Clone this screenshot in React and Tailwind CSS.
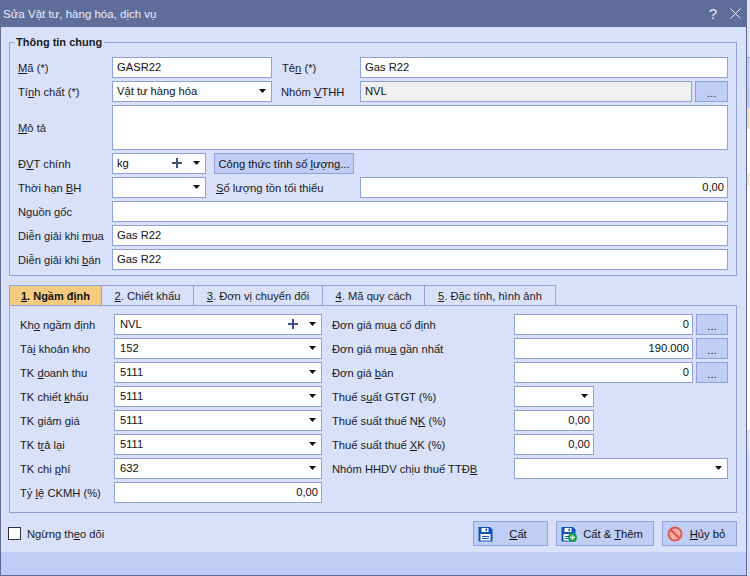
import React from "react";

const caret = (
  <svg width="7" height="4" viewBox="0 0 7 4" className="shrink-0">
    <path d="M0 0h7L3.5 4z" fill="#111" />
  </svg>
);

const plus = (
  <svg width="10" height="10" viewBox="0 0 10 10" className="shrink-0">
    <path d="M4 0h2v4h4v2H6v4H4V6H0V4h4z" fill="#3f5080" />
  </svg>
);

const Floppy = ({ add }) => (
  <svg width="16" height="16" viewBox="0 0 16 16" className="shrink-0">
    <path d="M.5 1h11.5l2.5 2.5V15.5H.5z" fill="#0f55b8" />
    <path d="M3.5 2h7v4h-7z" fill="#fff" />
    <path d="M7.5 2.6h1.6v2.6H7.5z" fill="#0f55b8" />
    <path d="M2.5 8h10v6.5h-10z" fill="#fff" />
    <path d="M4 10.5h7M4 12.5h7" stroke="#0f55b8" />
    {add && <circle cx="11.5" cy="11.5" r="4.5" fill="#12a150" />}
    {add && <path d="M9.2 11.5h4.6M11.5 9.2v4.6" stroke="#fff" strokeWidth="1.4" />}
  </svg>
);

const cancelIcon = (
  <svg width="16" height="16" viewBox="0 0 16 16" className="shrink-0">
    <circle cx="8" cy="8" r="6.5" fill="#f3b0a8" stroke="#e05a50" strokeWidth="2" />
    <path d="M3.6 3.6l8.8 8.8" stroke="#e05a50" strokeWidth="2.2" />
  </svg>
);

// hotkey letter, the old winforms way
const L = ({ a, u, b }) => (
  <>
    {a}
    <span className="underline">{u}</span>
    {b}
  </>
);

const Label = ({ className = "", children }) => (
  <span className={`whitespace-nowrap ${className}`}>{children}</span>
);

const Box = ({ className = "", children, right, gray }) => (
  <div
    className={`h-[21px] flex items-center border border-[#8fa2dc] pb-px text-[#111] ${
      gray ? "bg-[#f0f0f0]" : "bg-white"
    } ${right ? "justify-end pr-[3px]" : "px-1"} ${className}`}
  >
    {children}
  </div>
);

const Select = ({ value, add, className = "", pad = "pl-1" }) => (
  <div
    className={`h-[21px] flex items-center border border-[#8fa2dc] bg-white ${pad} pr-[5px] pb-px text-[#111] ${className}`}
  >
    <span className="flex-1">{value}</span>
    {add && <span className="mr-[11px] flex">{plus}</span>}
    {caret}
  </div>
);

const Dots = ({ className = "" }) => (
  <div
    className={`h-[21px] flex items-end justify-center pb-[2px] border border-[#8fa2dc] bg-[#c0cef5] leading-[12px] ${className}`}
  >
    ...
  </div>
);

const Row = ({ className = "", children }) => (
  <div className={`flex items-center h-[21px] ${className}`}>{children}</div>
);

const tabs = [
  { w: "w-[93px]", label: <L u="1" b=". Ngầm định" />, active: true },
  { w: "w-[92px]", label: <L u="2" b=". Chiết khấu" /> },
  { w: "w-[129px]", label: <L u="3" b=". Đơn vị chuyển đổi" /> },
  { w: "w-[102px]", label: <L u="4" b=". Mã quy cách" /> },
  { w: "w-[131px]", label: <L u="5" b=". Đặc tính, hình ảnh" /> },
];

const accounts = [
  { label: <L a="Tà" u="i" b=" khoản kho" />, value: "152" },
  { label: <L a="TK " u="d" b="oanh thu" />, value: "5111" },
  { label: <L a="TK chiết " u="k" b="hấu" />, value: "5111" },
  { label: <L a="TK " u="g" b="iảm giá" />, value: "5111" },
  { label: <L a="TK t" u="r" b="ả lại" />, value: "5111" },
  { label: <L a="TK chi " u="p" b="hí" />, value: "632" },
];

const prices = [
  { label: <L a="Đơn giá mu" u="a" b=" cố định" />, value: "0" },
  { label: <L a="Đơn giá mu" u="a" b=" gần nhất" />, value: "190.000" },
  { label: <L a="Đơn giá " u="b" b="án" />, value: "0" },
];

const Btn = ({ className = "", icon, children }) => (
  <div
    className={`h-[25px] flex items-center border border-[#8fa2dc] bg-[#c0cef5] text-[#111] ${className}`}
  >
    {icon}
    <span className="flex-1 text-center">{children}</span>
  </div>
);

export default function App() {
  return (
    <div className="w-[750px] h-[576px] flex overflow-hidden bg-white text-[11.2px] leading-[14px] text-[#1a1a1a] font-['Liberation_Sans',sans-serif]">
      <div className="w-[747px] h-full flex flex-col border-l border-r border-b border-[#5f6d9a] bg-[#d9e1fa]">
        <div className="h-[27px] shrink-0 -mx-px flex items-center pl-[3px] pr-[6px] bg-[#5f6d9a] text-[#e8ecf8]">
          <span className="flex-1 text-[11.5px]">Sửa Vật tư, hàng hóa, dịch vụ</span>
          <span className="text-[15px] mr-[13px]">?</span>
          <svg width="11" height="11" viewBox="0 0 11 11">
            <path d="M.5.5l10 10M10.5.5l-10 10" stroke="#e8ecf8" />
          </svg>
        </div>

        <div className="flex-1 flex flex-col pl-[8px] pr-[9px] pt-[15px]">
          <div className="relative h-[234px] border border-[#8fa2dc] pl-[8px] pr-[8px] pt-[14px] flex flex-col gap-[3px]">
            <span className="absolute -top-[8px] left-[4px] px-[2px] bg-[#d9e1fa] font-bold text-[11px]">
              Thông tin chung
            </span>
            <Row>
              <Label className="w-[94px]"><L u="M" b="ã (*)" /></Label>
              <Box className="w-[160px]">GASR22</Box>
              <Label className="w-[88px] pl-[10px]"><L a="Tê" u="n" b=" (*)" /></Label>
              <Box className="flex-1">Gas R22</Box>
            </Row>
            <Row>
              <Label className="w-[94px]"><L a="Tí" u="n" b="h chất (*)" /></Label>
              <Select className="w-[160px]" value="Vật tư hàng hóa" />
              <Label className="w-[88px] pl-[9px]"><L a="Nhóm " u="V" b="THH" /></Label>
              <Box gray className="w-[332px]">NVL</Box>
              <Dots className="ml-[3px] flex-1" />
            </Row>
            <div className="flex items-center h-[45px]">
              <Label className="w-[94px]"><L u="M" b="ô tả" /></Label>
              <div className="flex-1 h-full border border-[#8fa2dc] bg-white" />
            </div>
            <Row>
              <Label className="w-[94px]"><L a="Đ" u="V" b="T chính" /></Label>
              <Select className="w-[94px]" value="kg" add />
              <div className="ml-[8px] w-[140px] h-[21px] flex items-center justify-center whitespace-nowrap border border-[#8fa2dc] bg-[#c0cef5] text-[#111]">
                <span><L a="Công thức tính số " u="l" b="ượng..." /></span>
              </div>
            </Row>
            <Row>
              <Label className="w-[94px]"><L a="Thời hạn " u="B" b="H" /></Label>
              <Select className="w-[94px]" />
              <Label className="w-[154px] pl-[10px]"><L u="S" b="ố lượng tồn tối thiểu" /></Label>
              <Box right className="flex-1">0,00</Box>
            </Row>
            <Row>
              <Label className="w-[94px]"><L a="N" u="g" b="uồn gốc" /></Label>
              <Box className="flex-1" />
            </Row>
            <Row>
              <Label className="w-[94px]"><L a="Diễn giải khi " u="m" b="ua" /></Label>
              <Box className="flex-1">Gas R22</Box>
            </Row>
            <Row>
              <Label className="w-[94px]"><L a="Diễn giải khi " u="b" b="án" /></Label>
              <Box className="flex-1">Gas R22</Box>
            </Row>
          </div>

          <div className="flex mt-[9px] h-[21px]">
            {tabs.map((t, i) => (
              <div
                key={i}
                className={`${t.w} flex items-center justify-center whitespace-nowrap border-t border-r border-[#8fa2dc] ${
                  i === 0 ? "border-l bg-[#f5cb80] font-bold text-[11px] text-[#111]" : ""
                }`}
              >
                <span>{t.label}</span>
              </div>
            ))}
          </div>

          <div className="h-[208px] -mt-px border border-[#8fa2dc] pl-[10px] pr-[8px] pt-[8px] flex gap-[10px]">
            <div className="w-[302px] flex flex-col gap-[3px]">
              <Row>
                <Label className="w-[94px]"><L a="Kh" u="o" b=" ngầm định" /></Label>
                <Select className="flex-1" pad="pl-[5px]" value="NVL" add />
              </Row>
              {accounts.map((a, i) => (
                <Row key={i}>
                  <Label className="w-[94px]">{a.label}</Label>
                  <Select className="flex-1" pad="pl-[5px]" value={a.value} />
                </Row>
              ))}
              <Row>
                <Label className="w-[94px]"><L a="Tỷ " u="l" b="ệ CKMH (%)" /></Label>
                <Box right className="flex-1">0,00</Box>
              </Row>
            </div>
            <div className="flex-1 flex flex-col gap-[3px]">
              {prices.map((p, i) => (
                <Row key={i}>
                  <Label className="w-[182px]">{p.label}</Label>
                  <Box right className="w-[179px]">{p.value}</Box>
                  <Dots className="ml-[3px] flex-1" />
                </Row>
              ))}
              <Row>
                <Label className="w-[182px]"><L a="Thuế s" u="u" b="ất GTGT (%)" /></Label>
                <Select className="w-[80px]" />
              </Row>
              <Row>
                <Label className="w-[182px]"><L a="Thuế suất thuế N" u="K" b=" (%)" /></Label>
                <Box right className="w-[80px]">0,00</Box>
              </Row>
              <Row>
                <Label className="w-[182px]"><L a="Thuế suất thuế " u="X" b="K (%)" /></Label>
                <Box right className="w-[80px]">0,00</Box>
              </Row>
              <Row>
                <Label className="w-[182px]"><L a="Nhóm HHDV chịu thuế TTĐ" u="B" /></Label>
                <Select className="flex-1" />
              </Row>
            </div>
          </div>

          <div className="flex items-center h-[25px] mt-[8px] -ml-px">
            <div className="w-[13px] h-[13px] border border-[#333] bg-white" />
            <span className="ml-[6px] flex-1"><L a="Ngừng th" u="e" b="o dõi" /></span>
            <Btn className="w-[75px] pl-[4px] pr-[5px]" icon={<Floppy />}><L u="C" b="ất" /></Btn>
            <Btn className="w-[98px] ml-[8px] pl-[4px] pr-[4px]" icon={<Floppy add />}><L a="Cất & " u="T" b="hêm" /></Btn>
            <Btn className="w-[75px] ml-[8px] pl-[4px] pr-[4px]" icon={cancelIcon}><L u="H" b="ủy bỏ" /></Btn>
          </div>
        </div>

        <div className="h-[23px] shrink-0 bg-[#c0cef5]" />
      </div>

      {/* sliver of the window behind the dialog */}
      <div className="w-[3px] flex flex-col">
        <div className="h-[57px] bg-[#dfe2ec]" />
        <div className="h-[31px] bg-[#c9d1ea] border-t border-[#9aa8d4]" />
        <div className="h-[20px] bg-[#c0cef5]" />
        <div className="h-[21px] bg-[#f5e0b8]" />
        <div className="h-[44px] bg-white" />
        <div className="h-[13px] bg-[#f8efc8]" />
        <div className="h-[244px] bg-white" />
        <div className="h-[23px] bg-[#e6e6e6]" />
        <div className="flex-1 bg-[#d5dcf2]" />
      </div>
    </div>
  );
}
